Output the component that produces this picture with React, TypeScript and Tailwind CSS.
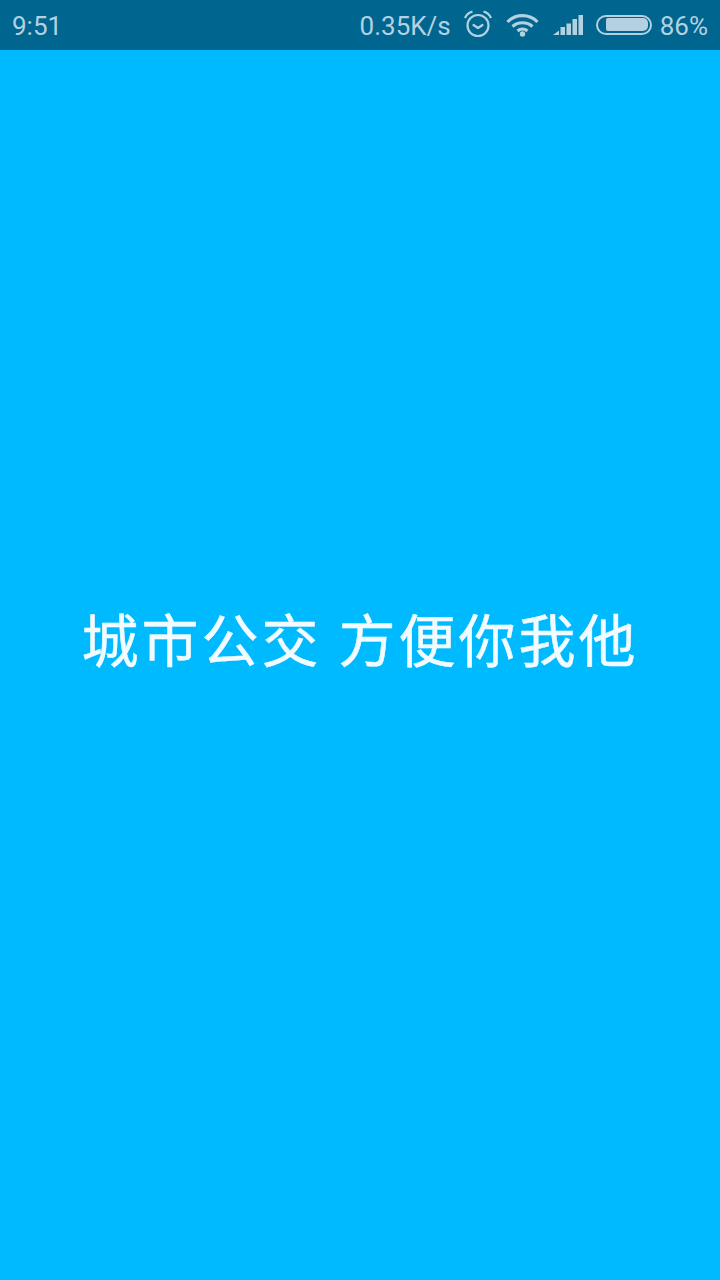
export default function App() {
  const c = "#b3d1e0";
  return (
    <div className="flex h-[1280px] w-[720px] flex-col overflow-hidden bg-[#00baff] font-['Roboto','Noto_Sans_CJK_SC',sans-serif]">
      <div className="flex h-[50px] items-center justify-between bg-[#00668f] pl-3 pr-3 text-[26px] font-normal text-[#b3d1e0]">
        <span className="pt-[2px]">9:51</span>
        <div className="flex items-center">
          <span className="pt-[2px]">0.35K/s</span>
          <svg className="ml-[12px] mb-[2px]" width="30" height="28" viewBox="0 0 30 28" fill="none" stroke={c} strokeWidth="2.200">
            <circle cx="15" cy="15.500" r="10.500" />
            <path d="M10.500 15 L15 18 L19.500 15" strokeLinecap="round" strokeLinejoin="round" />
            <path d="M2 8 C3.500 4.500 6 2.500 9.500 1.500" />
            <path d="M28 8 C26.500 4.500 24 2.500 20.500 1.500" />
          </svg>
          <svg className="ml-[13px]" width="33" height="24" viewBox="0 0 33 24" fill="none" stroke={c} strokeWidth="3.200">
            <path d="M1.500 9 C9.500 0.500 23.500 0.500 31.500 9" />
            <path d="M6.500 13.500 C12 8.500 21 8.500 26.500 13.500" />
            <path d="M11.500 18 C14.500 15.500 18.500 15.500 21.500 18" />
            <circle cx="16.500" cy="21" r="2.700" fill={c} stroke="none" />
          </svg>
          <svg className="ml-[13px]" width="32" height="22" viewBox="0 0 32 22" fill={c}>
            <polygon points="1,21 7,21 7,16.500" />
            <rect x="8.500" y="13" width="4.500" height="8" />
            <rect x="14.500" y="9.500" width="4.500" height="11.500" />
            <rect x="20.500" y="5" width="4.500" height="16" />
            <rect x="26.500" y="1" width="4.500" height="20" />
          </svg>
          <div className="mb-[1px] ml-[12px] flex h-[20px] w-[56px] items-center rounded-[10px] border-2 border-[#b3d1e0] pl-[8px]">
            <div className="h-[13px] w-[42px] rounded-r-[5px] rounded-l-[2px] bg-[#b3d1e0]" />
          </div>
          <span className="ml-[8px] pt-[2px]">86%</span>
        </div>
      </div>
      <div className="flex flex-1 items-center justify-center pb-[46px]">
        <span className="text-[57px] leading-none font-normal tracking-[3px] whitespace-pre text-[#f2fbff] [-webkit-text-stroke:0.5px_#f2fbff]">城市公交 方便你我他</span>
      </div>
    </div>
  );
}
